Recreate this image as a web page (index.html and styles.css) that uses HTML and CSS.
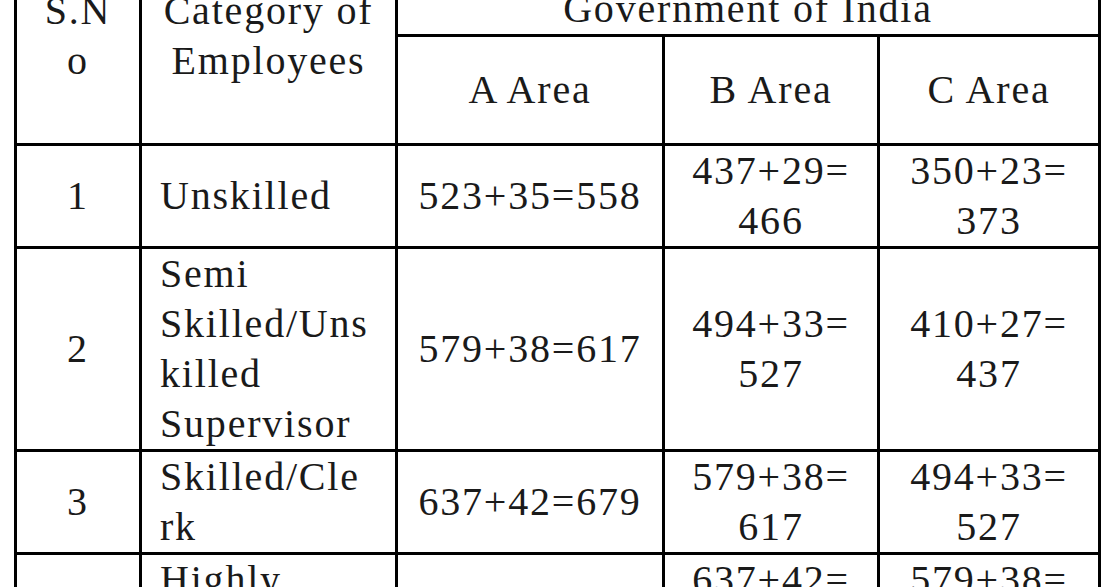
FILE: index.html
```html
<!DOCTYPE html>
<html lang="en">
<head>
<meta charset="utf-8">
<title>Wages Table</title>
<link rel="stylesheet" href="styles.css">
</head>
<body>
<div class="table">
  <div class="cell head-top span-rows col-sno">S.N<br>o</div>
  <div class="cell head-top span-rows col-cat">Category of<br>Employees</div>
  <div class="cell span-cols">Government of India</div>
  <div class="cell">A Area</div>
  <div class="cell">B Area</div>
  <div class="cell">C Area</div>

  <div class="cell">1</div>
  <div class="cell left">Unskilled</div>
  <div class="cell">523+35=558</div>
  <div class="cell">437+29=<br>466</div>
  <div class="cell">350+23=<br>373</div>

  <div class="cell">2</div>
  <div class="cell left">Semi<br>Skilled/Uns<br>killed<br>Supervisor</div>
  <div class="cell">579+38=617</div>
  <div class="cell">494+33=<br>527</div>
  <div class="cell">410+27=<br>437</div>

  <div class="cell">3</div>
  <div class="cell left">Skilled/Cle<br>rk</div>
  <div class="cell">637+42=679</div>
  <div class="cell">579+38=<br>617</div>
  <div class="cell">494+33=<br>527</div>

  <div class="cell">4</div>
  <div class="cell left">Highly<br>Skilled</div>
  <div class="cell">700+47=747</div>
  <div class="cell">637+42=<br>679</div>
  <div class="cell">579+38=<br>617</div>
</div>
</body>
</html>
```
FILE: styles.css
```css
html, body {
  margin: 0;
  padding: 0;
  background: #ffffff;
  height: 587px;
  overflow: hidden;
}

.table {
  display: grid;
  grid-template-columns: 125px 256px 267px 215px 221px;
  grid-template-rows: 54px 109px 103px 203px 103px 103px;
  width: 1087px;
  box-sizing: border-box;
  margin: -20px 0 0 14px;
  border-left: 3px solid #000;
  border-top: 3px solid #000;
  font-family: "Liberation Serif", "Times New Roman", serif;
  font-size: 40px;
  line-height: 50px;
  letter-spacing: 1.8px;
  color: #1a1a1a;
}

.cell {
  box-sizing: border-box;
  border-right: 3px solid #000;
  border-bottom: 3px solid #000;
  display: flex;
  flex-direction: column;
  justify-content: center;
  align-items: center;
  text-align: center;
  white-space: nowrap;
}

.span-rows {
  grid-row: span 2;
}

.span-cols {
  grid-column: span 3;
}

.head-top {
  justify-content: flex-start;
  padding-top: 3px;
}

.left {
  align-items: flex-start;
  text-align: left;
  padding-left: 18px;
}
```
